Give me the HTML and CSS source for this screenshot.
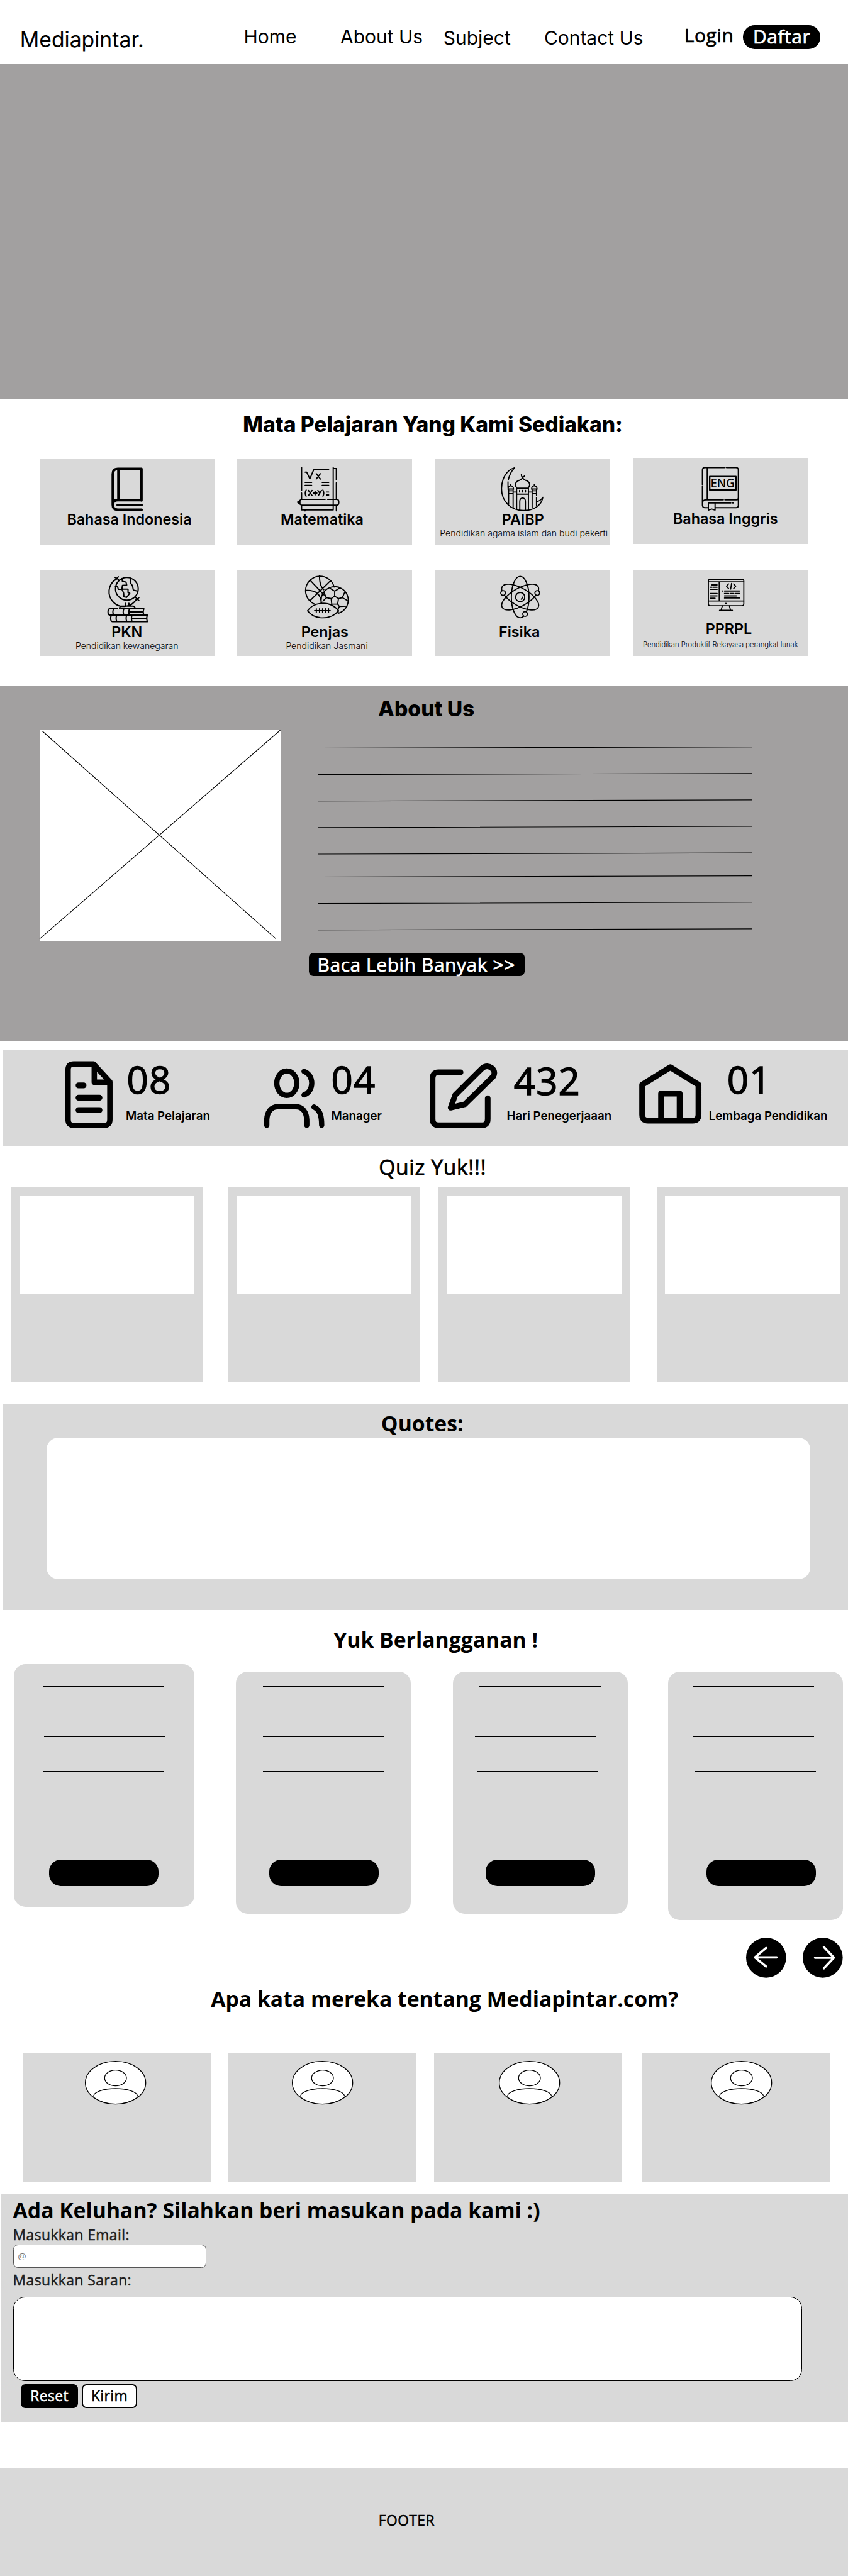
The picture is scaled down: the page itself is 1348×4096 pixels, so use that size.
FILE: index.html
```html
<!DOCTYPE html>
<html lang="id">
<head>
<meta charset="utf-8">
<title>Mediapintar</title>
<link rel="stylesheet" href="styles.css">
</head>
<body>
<div class="page">
  <header class="header">
    <div class="brand">Mediapintar.</div>
    <a class="nav">Home</a>
    <a class="nav">About Us</a>
    <a class="nav nav-low">Subject</a>
    <a class="nav nav-low">Contact Us</a>
    <a class="login medium">Login</a>
    <a class="register medium">Daftar</a>
  </header>

  <section class="hero"></section>

  <section class="subjects">
    <h2 class="title title-inter">Mata Pelajaran Yang Kami Sediakan:</h2>
    <div class="subject-grid">
      <article class="subject">
        <svg class="icon" viewBox="0 0 90 84" stroke-width="4.3"><path d="M30.2 12.2V65M69.3 66V12.2H29q-8.4 0-8.4 9V73.5q0 8.2 8.4 8.2H69.6M69.3 65.3H29q-8.4 0-8.4 8.4M28.8 73.7H69.6"/></svg>
        <h3 class="name indo">Bahasa Indonesia</h3>
      </article>
      <article class="subject">
        <svg class="icon" viewBox="0 0 90 84" stroke-width="2.1"><path d="M5.8 10V48.7M5.8 53.3V63M5.8 74V82H59.5V10M59.5 11.7H64.8V31M64.8 36V64M64.8 74.7V83.7M45.8 64H5.4L-1 69L5.4 74H65q4 0 4-4V68q0-4-4-4H50M11.8 18h2.7l5.3 11.3L26.2 14H51.8M11.8 35.3h11M11.8 40.3h11M40.8 35.3h11M40.8 40.3h11M11 83.5h1"/><path class="solid" d="M-1 69L3 66V72z"/><path d="M30.7 20.5l7 9M37.7 20.5l-7 9M48 51.7h3.8M48 56.7h3.8M13.5 48.3q-3 5.2 0 10.4M42 48.3q3 5.2 0 10.4M17.5 49l6 8.6M23.5 49l-6 8.6M25.5 53.4h6.4M28.7 50.2v6.4M33.5 49l3 4.5M39.5 49l-5.3 8.6"/></svg>
        <h3 class="name mate">Matematika</h3>
      </article>
      <article class="subject">
        <svg class="icon" viewBox="0 0 90 84" stroke-width="2"><path d="M20.5 30.3Q23 19 30.8 10.5C17 14 8.8 30 8.8 46C8.8 68 25 83.1 45.8 83.1C64 83.1 77 74 79 60.5Q75 67 68.5 68M19.8 34.3V44M34.5 81V45H54.5V81M34.5 55.3h20M35 45Q32 42 32.6 37.5Q34 33 40 31.5Q43.5 30 44.5 26.5Q45.5 30 49 31.5Q55 33 56.4 37.5Q57 42 54 45M42.5 22q0 4 2.5 4q2.5 0 3-2.5M39.5 48.7v3M44.5 48.7v3M49.5 48.7v3M39.8 82V68q0-6 4.8-6.5q4.8.5 4.8 6.5V82M20.8 72V47M28.5 78V47M19.5 46.5h10M20 46q0-4.5 4.5-5q4.5.5 4.5 5M24.5 41v-2.5M20.8 49.5h7.7M20.8 54.3h7.7M28.5 51.7h6M54.5 51.7h6M60.8 78V47M68.2 47V57M68.2 61V74M59.5 46.5h10M60 46q0-4.5 4.5-5q4.5.5 4.5 5M64.5 41v-2.5M60.8 49.5h7.4M60.8 54.3h7.4"/></svg>
        <h3 class="name paibp">PAIBP</h3>
        <p class="note note-paibp">Pendidikan agama islam dan budi pekerti</p>
      </article>
      <article class="subject subject-raised">
        <svg class="icon" viewBox="0 0 90 84" stroke-width="2.1"><path d="M53 11.3H18.5q-4 0-4 4V40M14.5 43V75q0 4.3 4.3 4.3H24M36.5 79.3H71.5q4 0 4-4V15.3q0-4-4-4H55.5M22.7 11.5V66M14.5 72q0-6 6-6H50M52.7 66H72q3.5 0 3.5-4M24.6 83V71.3H62.7M65.8 71.3h1.2M36 71.3V83.3l-5.7-1.7-5.7 1.7V71.3"/><path stroke-width="2.5" d="M26.9 26.3H71.4V49.2H26.9z"/><text class="eng" x="28.2" y="44.8" textLength="41" lengthAdjust="spacingAndGlyphs">ENG</text></svg>
        <h3 class="name ing">Bahasa Inggris</h3>
      </article>
      <article class="subject subject-low">
        <svg class="icon" viewBox="0 0 90 84" stroke-width="2.2"><circle cx="44.5" cy="27" r="19.3"/><path d="M25.5 11A25 25 0 1 0 60.5 45M24.5 7.5l6 4M30 6.5l-4.5 5.5M59 41.5l6 5.5M65 42l-5.5 5M42.5 51.5V56M48 51.5V56M32 61q0-4.7 4-4.7H54.5q4 0 4 4.7M29 61H15.500q-3 0-3 5.3t3 5.3H73.5M34 61H73.5q-2.5 5.3 0 10.6M22 61q-2.5 5.3 0 10.6M39.5 61q-2.5 5.3 0 10.6M49 61q-2.5 5.3 0 10.6M49 66.3H72.5M79.5 71.7H20q-3 0-3 5.4t3 5.6H79.5q-2.5-5.5 0-11M27.5 71.7q-2.5 5.5 0 11M44.5 71.7q-2.5 5.5 0 11M53.5 71.7q-2.5 5.5 0 11M53.5 77.2H78.5"/><path d="M36 9.5l1 5 6 1 1.3 5-7.3.7-1 6.5h-6l-1.5-5h-3.5M36 27.5h10.5v6l3 1-5.5 7-4.5-1-.5-6.5-3-6.5M50.5 9v8l3.5 4.5 1.5 7.5 7.5 2"/></svg>
        <h3 class="name">PKN</h3>
        <p class="note">Pendidikan kewanegaran</p>
      </article>
      <article class="subject subject-low">
        <svg class="icon" viewBox="0 0 90 84" stroke-width="2"><path d="M61.2 24A24.7 24.7 0 1 0 29.2 53.5M39.5 51A23 23 0 1 1 68 68.5M15.8 64.3Q25 51.5 42 51.5T68.5 64.3Q59 76.3 42 76.3T15.8 64.3zM27.8 64H54.5M30.8 60.7v6.6M36.2 60.7v6.6M41.5 60.7v6.6M46.5 60.7v6.6M51.5 60.7v6.6M20.8 13L44 37.5M55.2 13L20.2 47M36.2 5.3Q36 22 43.5 28.5M12.5 29.7Q38 28 39.2 51"/><path d="M54 26l8 5 8-5M62 31v8.5M56 43.5l6-4 6.5 4-1.5 9.5H57zM56 43.5l-8-1.5-4-8M48 42l-6 6M68.5 43.5L75 42l4-9M75 42l9.5 5.5M67 53l3 4 13-.5M70 57l-2 4M68 68v-5"/></svg>
        <h3 class="name">Penjas</h3>
        <p class="note note-penjas">Pendidikan Jasmani</p>
      </article>
      <article class="subject subject-low">
        <svg class="icon" viewBox="0 0 90 84" stroke-width="2"><g><ellipse cx="40.5" cy="41" rx="15" ry="35.3"/><ellipse cx="40.5" cy="41" rx="15" ry="35.3" transform="rotate(60 40.5 41)"/><ellipse cx="40.5" cy="41" rx="15" ry="35.3" transform="rotate(-60 40.5 41)"/></g><circle cx="40.5" cy="41" r="7.8"/><path d="M44.2 41q0 2-2 3.5"/><g class="electron"><circle cx="11.5" cy="34" r="4"/><circle cx="69.5" cy="34" r="4"/><circle cx="48.8" cy="69.7" r="4"/></g></svg>
        <h3 class="name fisika">Fisika</h3>
      </article>
      <article class="subject subject-rpl">
        <svg class="icon" viewBox="0 0 90 84" stroke-width="1.9"><rect x="24.6" y="10.7" width="60.2" height="45" rx="3"/><path d="M24.6 15H84.8M24.6 47.7H84.8M43 15V47.7M48.3 56l-2 7M60.4 56l1.8 7M43.5 63.5H65.5M54 51.7h.8M30.5 20.3h9M28 24.3h3M33 24.3h6.5M28 28h11.5M28 35h11.5M28 39h11.5M28 43h8M48.2 30.7h.8M52 30.7H77.5M52 35h7M61.5 35h6.5M70.5 35h7M52 39H72M52 42.7H77.5M59 18.5l-3.5 4 3.5 4M67.5 18.5l3.5 4-3.5 4M64 17.8l-1.5 9.7"/></svg>
        <h3 class="name rpl">PPRPL</h3>
        <p class="note note-rpl">Pendidikan Produktif Rekayasa perangkat lunak</p>
      </article>
    </div>
  </section>

  <section class="about">
    <h2 class="title title-inter title-about">About Us</h2>
    <div class="about-row">
      <svg class="placeholder" viewBox="0 0 409 358"><path d="M4.6 1.6L401.4 354.5M408.7 0L0 354.5"/></svg>
      <div class="about-text">
        <svg class="about-lines" viewBox="0 0 737 378"><path d="M0 30.5l737-2M0 75.5l737-2M0 120.5l737-2M0 165.5l737-2M0 210.5l737-2M0 249.5l737-2M0 294.5l737-2M0 339.5l737-2"/></svg>
        <a class="more medium">Baca Lebih Banyak &gt;&gt;</a>
      </div>
    </div>
  </section>

  <section class="stats">
    <svg class="stat-icon doc" viewBox="0 0 80 115" stroke-width="9.2"><path d="M47.5 5H14Q4.5 5 4.5 15V99.5Q4.5 109.5 14 109.5H66Q75.5 109.5 75.5 99.5V35.5z"/><path d="M49 9V36.2H74"/><path d="M22.3 41.5h8.5M22.3 62.5h35.5M22.3 83.5h35.5" stroke-width="10"/></svg>
    <div class="stat"><div class="number medium n-08">08</div><div class="label">Mata Pelajaran</div></div>
    <svg class="stat-icon users" viewBox="0 0 102 102" stroke-width="9"><ellipse cx="38.4" cy="26" rx="17" ry="20.8"/><path d="M67.7 6C85 12 85 40 67.7 46M4.3 97.5V90C4.3 75 12 66 23 66H54C65 66 72.3 75 72.3 90V97.5M84.6 66.500C94 71 97.6 80 97.6 97.5"/></svg>
    <div class="stat"><div class="number medium n-04">04</div><div class="label">Manager</div></div>
    <svg class="stat-icon edit" viewBox="0 0 115 111" stroke-width="9.6"><path d="M52.5 16H15Q5 16 5 26.5V95.5Q5 106 15 106H89Q98.6 106 98.6 95.5V60M35.6 76.2L43.5 54.5L89.5 8.8C100 .5 115 12 108 23L59.5 70.5z"/></svg>
    <div class="stat"><div class="number medium n-432">432</div><div class="label">Hari Penegerjaaan</div></div>
    <svg class="stat-icon house" viewBox="0 0 106 102" stroke-width="10"><path d="M53 6.5L5.2 36V87Q5.2 97 15 97H91Q100.8 97 100.8 87V36zM37.3 97V51H68.8V97"/></svg>
    <div class="stat"><div class="number medium n-01">01</div><div class="label">Lembaga Pendidikan</div></div>
  </section>

  <section class="quiz">
    <h2 class="title medium title-quiz">Quiz Yuk!!!</h2>
    <div class="quiz-row">
      <div class="quiz-card"><div class="thumb"></div></div>
      <div class="quiz-card"><div class="thumb"></div></div>
      <div class="quiz-card"><div class="thumb"></div></div>
      <div class="quiz-card"><div class="thumb"></div></div>
    </div>
  </section>

  <section class="quotes">
    <h2 class="title">Quotes:</h2>
    <div class="quote-box"></div>
  </section>

  <section class="plans">
    <h2 class="title title-plans">Yuk Berlangganan !</h2>
    <div class="plan-row">
      <div class="plan plan-a"><hr><hr class="in"><hr><hr><hr class="in"><div class="cta"></div></div>
      <div class="plan plan-b"><hr><hr><hr><hr><hr><div class="cta"></div></div>
      <div class="plan plan-c"><hr><hr class="out-far"><hr class="out-near"><hr class="in-far"><hr><div class="cta"></div></div>
      <div class="plan plan-d"><hr><hr><hr class="in-far"><hr><hr><div class="cta"></div></div>
    </div>
    <div class="arrows">
      <svg class="arrow" viewBox="0 0 68 68"><circle cx="34" cy="34" r="34"/><path d="M52 33.5H15M34 17.5L15 33.5L34 49"/></svg>
      <svg class="arrow" viewBox="0 0 68 68"><circle cx="34" cy="34" r="34"/><path d="M21 34H52M36 16L53 34L36 52"/></svg>
    </div>
  </section>

  <section class="reviews">
    <h2 class="title title-reviews">Apa kata mereka tentang Mediapintar.com?</h2>
    <div class="review-row">
      <div class="review review-a"><svg class="avatar" viewBox="0 0 104 74"><ellipse cx="52" cy="37" rx="51.3" ry="36.3"/><ellipse cx="52" cy="29" rx="18.5" ry="13.3"/><path d="M14 60.5C18 42.5 86 42.5 90 60.5"/></svg></div>
      <div class="review review-b"><svg class="avatar" viewBox="0 0 104 74"><ellipse cx="52" cy="37" rx="51.3" ry="36.3"/><ellipse cx="52" cy="29" rx="18.5" ry="13.3"/><path d="M14 60.5C18 42.5 86 42.5 90 60.5"/></svg></div>
      <div class="review review-c"><svg class="avatar" viewBox="0 0 104 74"><ellipse cx="52" cy="37" rx="51.3" ry="36.3"/><ellipse cx="52" cy="29" rx="18.5" ry="13.3"/><path d="M14 60.5C18 42.5 86 42.5 90 60.5"/></svg></div>
      <div class="review review-d"><svg class="avatar" viewBox="0 0 104 74"><ellipse cx="52" cy="37" rx="51.3" ry="36.3"/><ellipse cx="52" cy="29" rx="18.5" ry="13.3"/><path d="M14 60.5C18 42.5 86 42.5 90 60.5"/></svg></div>
    </div>
  </section>

  <section class="feedback">
    <h2 class="title title-feedback">Ada Keluhan? Silahkan beri masukan pada kami :)</h2>
    <div class="field-label medium">Masukkan Email:</div>
    <div class="email">@</div>
    <div class="field-label medium">Masukkan Saran:</div>
    <div class="message"></div>
    <div class="actions"><a class="btn btn-dark medium">Reset</a><a class="btn btn-light medium">Kirim</a></div>
  </section>

  <footer class="footer medium">FOOTER</footer>
</div>
</body>
</html>
```
FILE: styles.css
```css
* { box-sizing: border-box; }
body { margin: 0; background: #fff; color: #000; overflow: hidden; }
.page { width: 1440px; zoom: 0.936111; font-family: "Open Sans", "Noto Sans", sans-serif; }
h2, h3, p { margin: 0; }
svg { display: block; fill: none; stroke: #000; overflow: visible; flex: none; }

.title { font-size: 36px; font-weight: 700; line-height: 44px; text-align: center; white-space: nowrap; }
.title-inter { font-family: Inter, sans-serif; font-size: 35.9px; font-weight: 800; }
/* medium weight: the regular cut, slightly thickened and opened up */
.medium { font-weight: 400; letter-spacing: .019em; -webkit-text-stroke: .024em currentColor; }

/* header */
.header { display: grid; grid-template-columns: 380px 164px 175px 171px 238px 101px 131px; align-items: start; height: 108px; padding-left: 34px; white-space: nowrap; }
.brand { margin-top: 45px; font: 400 36px/44px Inter, sans-serif; }
.nav { margin-top: 42.4px; font: 400 32px/40px Inter, sans-serif; }
.nav-low { margin-top: 44.4px; }
.login { margin-top: 37.3px; font-size: 32px; line-height: 44px; }
.register { width: 131px; height: 40px; margin: 43px 0 0 -1px; border-radius: 20px; background: #000; color: #fff; font-size: 32px; line-height: 39px; text-align: center; }

.hero { height: 570px; background: #a2a0a0; }

/* subjects */
.subjects { height: 486px; padding-top: 20.6px; }
.subjects .title { padding-left: 30px; }
.subject-grid { display: grid; grid-template-columns: repeat(4, 297px); grid-auto-rows: 145px; gap: 44px 39px; margin: 37.4px 0 0 67px; }
.subject { display: flex; flex-direction: column; align-items: center; padding-top: 4px; background: #d9d9d9; }
.subject-raised { margin-top: -1px; margin-bottom: 1px; }
.icon { width: 90px; height: 84px; stroke-linecap: round; stroke-linejoin: round; }
.icon .solid { fill: #000; }
.icon .electron { fill: #d9d9d9; }
.icon .eng { fill: #000; stroke: none; font: 500 20.5px "Noto Sans", sans-serif; }
.name { margin-top: -.2px; font: 600 24.9px/30px Inter, sans-serif; white-space: nowrap; }
.subject-low .name { margin-top: 1.8px; }
.subject-rpl .name { margin-top: -3.8px; }
.note { font: 300 15px/18px Inter, sans-serif; white-space: nowrap; }
.indo { padding-left: 8px; }
.mate { padding-right: 9px; }
.paibp { padding-left: 1px; }
.ing { padding-left: 17px; }
.fisika { padding-right: 11px; }
.rpl { padding-left: 28px; }
.note-paibp { padding-left: 4px; }
.note-penjas { padding-left: 7px; }
.note-rpl { margin-top: 3.7px; font-size: 12px; }

/* about */
.about { height: 604px; padding-top: 17.4px; background: #a2a0a0; }
.title-about { padding-left: 8px; }
.about-row { display: flex; gap: 65px; margin: 14.6px 0 0 67px; }
.placeholder { width: 409px; height: 358px; background: #fff; stroke-width: 1.2; }
.about-lines { width: 737px; height: 378px; stroke-width: 1.2; }
.more { display: block; width: 367px; height: 40px; margin-left: -17px; padding-left: 15px; border-radius: 8px; background: #000; color: #fff; font-size: 32px; line-height: 40.6px; white-space: nowrap; }

/* stats */
.stats { display: grid; grid-template-columns: 102px 235.4px 113.6px 167px 131px 224.4px 118.6px auto; align-items: start; height: 162px; margin: 16px 0 0 4px; padding-left: 107.6px; background: #d9d9d9; }
.stat-icon { stroke-linecap: round; stroke-linejoin: round; }
.doc { width: 80px; height: 115px; margin-top: 18px; }
.users { width: 102px; height: 102px; margin-top: 30px; }
.edit { width: 115px; height: 111px; margin-top: 21px; }
.house { width: 106px; height: 102px; margin-top: 22px; }
.stat { padding-top: 9.6px; white-space: nowrap; }
.number { height: 80px; font-size: 64px; line-height: 80px; }
.n-08 { padding-left: 1.7px; }
.n-432 { padding: 2.7px 0 0 12px; }
.n-01 { padding-left: 31px; }
.label { margin-top: 10.5px; font: 600 20px/24px Inter, sans-serif; }

/* quiz */
.quiz { padding-top: 12px; }
.title-quiz { padding-left: 29px; font-weight: 400; line-height: 48px; }
.quiz-row { display: grid; grid-template-columns: 368.5px 356.5px 371px 325px; height: 331px; margin: 11px 0 0 19px; }
.quiz-card { width: 325px; padding: 15px 14px; background: #d9d9d9; }
.thumb { height: 166px; background: #fff; }

/* quotes */
.quotes { height: 349px; margin: 38px 0 0 4px; padding: 10.4px 64px 0 75px; background: #d9d9d9; }
.quotes .title { padding-right: 21px; }
.quote-box { height: 240px; margin-top: 1.6px; border-radius: 20px; background: #fff; }

/* plans */
.plans { padding-top: 28.2px; }
.title-plans { padding-left: 40px; }
.plan-row { display: grid; grid-template-columns: 378px 367.7px 366.3px 297px; align-items: start; height: 464px; margin: 19.8px 0 0 23px; }
.plan { width: 297px; height: 412px; margin-top: 12px; border-radius: 20px; background: #d9d9d9; overflow: hidden; }
.plan hr { width: 206px; height: 1.07px; margin: 0 0 0 46px; border: 0; background: #000; }
.plan hr:nth-of-type(1) { margin-top: 25px; }
.plan hr:nth-of-type(2) { margin-top: 85px; }
.plan hr:nth-of-type(3) { margin-top: 57px; }
.plan hr:nth-of-type(4) { margin-top: 51px; }
.plan hr:nth-of-type(5) { margin-top: 63px; }
.cta { width: 186px; height: 44px; margin: 34px 0 0 56px; border-radius: 20px; background: #000; }
.plan-a { width: 307.5px; margin-top: 0; }
.plan-a hr { margin-left: 49.6px; }
.plan-a hr.in { margin-left: 51.5px; }
.plan-a hr:nth-of-type(1) { margin-top: 37px; }
.plan-a .cta { margin-left: 60px; }
.plan-c hr { margin-left: 45px; }
.plan-c hr.out-far { margin-left: 37.5px; }
.plan-c hr.out-near { margin-left: 41px; }
.plan-c hr.in-far { margin-left: 48.5px; }
.plan-d { height: 422px; }
.plan-d hr { margin-left: 41.5px; }
.plan-d hr.in-far { margin-left: 45px; }
.plan-d .cta { margin-left: 65px; }
.arrows { display: flex; justify-content: flex-end; gap: 28.5px; padding-right: 9px; }
.arrow { width: 68px; height: 68px; stroke: none; }
.arrow circle { fill: #000; }
.arrow path { stroke: #fff; stroke-width: 4; stroke-linecap: round; stroke-linejoin: round; }

/* reviews */
.reviews { padding-top: 14.7px; }
.title-reviews { padding-left: 70px; }
.review-row { display: grid; grid-template-columns: 349px 349.9px 353.5px 319px; height: 218px; margin: 70.3px 0 0 38.6px; }
.review { width: 319px; padding-top: 13px; background: #d9d9d9; }
.avatar { width: 104px; height: 74px; stroke-width: 1.4; }
.avatar ellipse { fill: #fff; }
.review-a { padding-left: 105.4px; }
.review-b { padding-left: 108.4px; }
.review-c { padding-left: 109.3px; }
.review-d { padding-left: 115.8px; }

/* feedback form */
.feedback { height: 388px; margin: 20px 0 0 2px; padding: 6.7px 0 0 20px; background: #d9d9d9; }
.title-feedback { text-align: left; }
.field-label { margin-top: 4.3px; color: #1e1e1e; font-size: 24.4px; line-height: 32px; }
.email { width: 328px; height: 39.5px; padding-left: 7px; border: 1px solid #555; border-radius: 8px; background: #fff; color: #757575; font-size: 16px; line-height: 38px; }
.email + .field-label { margin-top: 5.3px; }
.message { width: 1340px; height: 143px; margin-top: 11.3px; border: 1.1px solid #000; border-radius: 20px; background: #fff; }
.actions { display: flex; gap: 5.7px; margin: 6px 0 0 13px; }
.btn { height: 40px; border: 2.2px solid #000; border-radius: 8px; font-size: 24.4px; line-height: 36.6px; text-align: center; }
.btn-dark { width: 98px; background: #000; color: #fff; }
.btn-light { width: 94.5px; background: #fff; }

.footer { height: 182.5px; margin-top: 79px; padding: 73px 59px 0 0; background: #d9d9d9; font-size: 24.4px; line-height: 32px; text-align: center; }
```
